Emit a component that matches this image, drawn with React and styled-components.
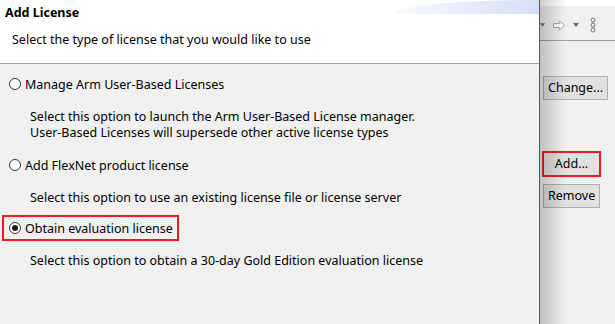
import React, { useState } from 'react';
import styled, { createGlobalStyle } from 'styled-components';

const GlobalStyle = createGlobalStyle`
  html, body {
    margin: 0;
    padding: 0;
    background: #f0f0f0;
  }
  body {
    font-family: "Noto Sans", "Liberation Sans", sans-serif;
    font-size: 12.5px;
    color: #000;
  }
`;

const options = [
  {
    id: 'ubl',
    label: 'Manage Arm User-Based Licenses',
    desc: [
      'Select this option to launch the Arm User-Based License manager.',
      'User-Based Licenses will supersede other active license types',
    ],
  },
  {
    id: 'flexnet',
    label: 'Add FlexNet product license',
    desc: ['Select this option to use an existing license file or license server'],
  },
  {
    id: 'eval',
    label: 'Obtain evaluation license',
    desc: ['Select this option to obtain a 30-day Gold Edition evaluation license'],
  },
];

const Screen = styled.div`
  display: flex;
  width: 615px;
  height: 324px;
  overflow: hidden;
`;

const Dialog = styled.div`
  width: 539px;
  flex-shrink: 0;
  display: flex;
  flex-direction: column;
  border-right: 1px solid #5a5a5a;
  background: #f0f0f0;
`;

const Header = styled.div`
  position: relative;
  height: 64px;
  background: #fff;
  border-bottom: 1px solid #a0a0a0;
  padding: 4px 0 0 5px;
  box-sizing: border-box;

  &::before {
    content: '';
    position: absolute;
    top: 0;
    right: 0;
    width: 145px;
    height: 14px;
    border-top-left-radius: 100% 100%;
    background: linear-gradient(to right, rgba(226, 232, 250, 0.2), #d7def6);
  }
`;

const Title = styled.div`
  font-weight: bold;
  line-height: 18px;
`;

const Subtitle = styled.div`
  margin: 9px 0 0 7px;
  line-height: 18px;
`;

const Body = styled.div`
  flex: 1;
  display: flex;
  flex-direction: column;
  align-items: flex-start;
  padding: 7px 0 0 2px;
`;

const OptionRow = styled.label`
  display: inline-flex;
  align-items: center;
  gap: 4px;
  height: 20px;
  padding: 1px 4px 1px 5px;
  border: 2px solid ${(p) => (p.$highlight ? '#ee1c1c' : 'transparent')};
  margin-top: ${(p) => p.$gap}px;
  cursor: default;
`;

const Radio = styled.span`
  width: 12px;
  height: 12px;
  box-sizing: border-box;
  border-radius: 50%;
  border: 1px solid #333;
  background: #fff;
  display: flex;
  align-items: center;
  justify-content: center;

  &::after {
    content: '';
    width: 6px;
    height: 6px;
    border-radius: 50%;
    background: ${(p) => (p.$checked ? '#1a1a1a' : 'transparent')};
  }
`;

const Description = styled.div`
  margin: 12px 0 0 28px;
  line-height: 16px;
`;

const Side = styled.div`
  position: relative;
  flex: 1;
  display: flex;
  flex-direction: column;
  background: #f0f0f0;

  &::after {
    content: '';
    position: absolute;
    top: 0;
    bottom: 0;
    left: 0;
    width: 26px;
    background: linear-gradient(to right, rgba(0, 0, 0, 0.2), rgba(0, 0, 0, 0));
    pointer-events: none;
  }
`;

const Toolbar = styled.div`
  height: 41px;
  box-sizing: border-box;
  border-top: 6px solid #fff;
  border-bottom: 1px solid #a0a0a0;
  display: flex;
  align-items: center;
  padding: 4px 0 0 0;
`;

const ToolIcon = styled.span`
  display: flex;
  flex-shrink: 0;
  width: ${(p) => p.$w}px;
  margin-right: ${(p) => p.$after || 0}px;
`;

const ButtonColumn = styled.div`
  display: flex;
  flex-direction: column;
  align-items: flex-start;
  padding: 35px 0 0 3px;
`;

const Button = styled.button`
  font-family: inherit;
  font-size: 12.5px;
  color: #000;
  height: ${(p) => (p.$highlight ? 26 : 24)}px;
  min-width: ${(p) => p.$width}px;
  padding: 0 4px;
  margin-top: ${(p) => p.$gap}px;
  margin-left: ${(p) => (p.$highlight ? -1 : 0)}px;
  background: #e1e1e1;
  border: ${(p) => (p.$highlight ? '2px solid #ee1c1c' : '1px solid #adadad')};
  border-radius: 0;
  line-height: 20px;
`;

const Caret = () => (
  <svg width="6" height="4" viewBox="0 0 6 4">
    <path d="M0 0h6L3 4z" fill="#666" />
  </svg>
);

const ForwardIcon = () => (
  <svg width="14" height="11" viewBox="0 0 14 11">
    <path
      d="M1.5 3.5h6V1l5 4.5-5 4.5V7.5h-6z"
      fill="#fff"
      stroke="#a8a8a8"
      strokeWidth="1"
      strokeLinejoin="round"
    />
  </svg>
);

const MenuIcon = () => (
  <svg width="6" height="16" viewBox="0 0 6 16">
    <circle cx="3" cy="3" r="2" fill="none" stroke="#777" />
    <circle cx="3" cy="8" r="2" fill="none" stroke="#777" />
    <circle cx="3" cy="13" r="2" fill="none" stroke="#777" />
  </svg>
);

const gaps = [0, 11, 9];

export default function App() {
  const [selected, setSelected] = useState('eval');

  return (
    <Screen>
      <GlobalStyle />
      <Dialog>
        <Header>
          <Title>Add License</Title>
          <Subtitle>Select the type of license that you would like to use</Subtitle>
        </Header>
        <Body>
          {options.map((o, i) => (
            <React.Fragment key={o.id}>
              <OptionRow
                $gap={gaps[i]}
                $highlight={o.id === 'eval'}
                onClick={() => setSelected(o.id)}
              >
                <Radio $checked={selected === o.id} />
                {o.label}
              </OptionRow>
              <Description>
                {o.desc.map((line) => (
                  <div key={line}>{line}</div>
                ))}
              </Description>
            </React.Fragment>
          ))}
        </Body>
      </Dialog>
      <Side>
        <Toolbar>
          <ToolIcon $w={5} $after={7}>
            <Caret />
          </ToolIcon>
          <ToolIcon $w={14} $after={7}>
            <ForwardIcon />
          </ToolIcon>
          <ToolIcon $w={6} $after={11}>
            <Caret />
          </ToolIcon>
          <ToolIcon $w={6}>
            <MenuIcon />
          </ToolIcon>
        </Toolbar>
        <ButtonColumn>
          <Button $width={62}>Change...</Button>
          <Button $width={59} $gap={51} $highlight>
            Add...
          </Button>
          <Button $width={57} $gap={7}>
            Remove
          </Button>
        </ButtonColumn>
      </Side>
    </Screen>
  );
}
